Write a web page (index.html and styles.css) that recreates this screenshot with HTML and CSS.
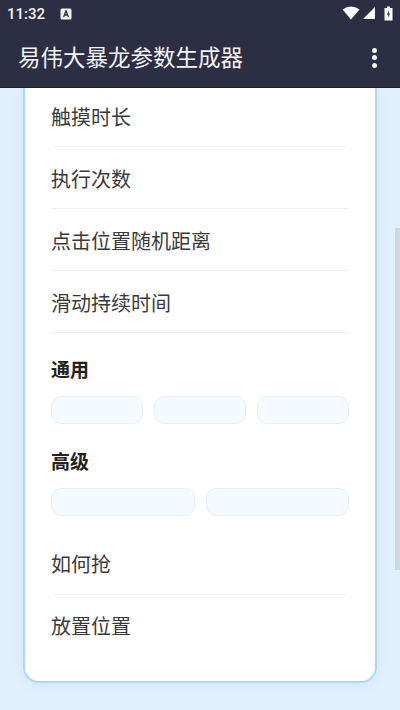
FILE: index.html
```html
<!DOCTYPE html>
<html lang="zh-CN">
<head>
  <meta charset="UTF-8" />
  <meta name="viewport" content="width=device-width, initial-scale=1.0"/>
  <title>易伟大暴龙参数生成器</title>
  <link rel="stylesheet" href="styles.css">
</head>
<body>
  <header class="app-header">
    <div class="status-bar">
      <span class="clock">11:32</span>
      <svg class="status-a" viewBox="0 0 12 12" width="12" height="12">
        <rect x="0.5" y="0.5" width="11" height="11" rx="1.5" fill="#f2f2f4"/>
        <path d="M3.6 9 L6 3 L8.4 9 M4.6 7 H7.4" fill="none" stroke="#2c2e43" stroke-width="1.3"/>
      </svg>
      <span class="status-right">
        <svg viewBox="0 0 18 14" width="18" height="14"><path d="M0.5 3.5 Q9 -2.5 17.500 3.500 L9 13.500 Z" fill="#fff"/></svg>
        <svg viewBox="0 0 14 14" width="14" height="14"><path d="M13 1 V13 H1 Z" fill="#fff"/></svg>
        <svg class="battery" viewBox="0 0 9 15" width="9" height="15">
          <path d="M3 0.500 H6 V2 H8.500 V14.500 H0.500 V2 H3 Z" fill="#fff"/>
          <path d="M5.200 4 L2.800 8.600 H4.300 L3.800 12 L6.200 7.400 H4.700 Z" fill="#2c2e43"/>
        </svg>
      </span>
    </div>
    <div class="toolbar">
      <h1 class="toolbar-title">易伟大暴龙参数生成器</h1>
      <div class="more"><i></i><i></i><i></i></div>
    </div>
  </header>

  <main class="content">
    <section class="card">
      <div class="row">触摸时长</div>
      <div class="row">执行次数</div>
      <div class="row">点击位置随机距离</div>
      <div class="row">滑动持续时间</div>

      <h2 class="group-title">通用</h2>
      <div class="inputs">
        <div class="input"></div>
        <div class="input"></div>
        <div class="input"></div>
      </div>

      <h2 class="group-title">高级</h2>
      <div class="inputs">
        <div class="input"></div>
        <div class="input"></div>
      </div>

      <div class="row after-inputs">如何抢</div>
      <div class="row last">放置位置</div>
    </section>
  </main>
  <div class="scrollbar"></div>
</body>
</html>
```

FILE: styles.css
```css
body {
  font-family: Roboto, "Noto Sans CJK SC", sans-serif;
  margin: 0;
  padding: 0;
  height: 710px;
  overflow: hidden;
  background: #e1f0fe;
  display: flex;
  flex-direction: column;
}
.app-header {
  background: #2c2e43;
  color: #fff;
  height: 88px;
  flex: none;
  border-bottom: 1px solid #1c1d2c;
  box-sizing: border-box;
  position: relative;
  z-index: 1;
}
.status-bar {
  height: 28px;
  display: flex;
  align-items: center;
  padding: 0 7px;
}
.clock {
  font-size: 15px;
  font-weight: 500;
  color: #f4f4f6;
}
.status-a {
  margin-left: 15px;
  margin-bottom: 1px;
}
.status-right {
  margin-left: auto;
  display: flex;
  align-items: center;
  gap: 2px;
  margin-bottom: 2px;
}
.battery {
  margin-left: 6px;
}
.toolbar {
  height: 60px;
  display: flex;
  align-items: center;
  justify-content: space-between;
  padding: 0 23px 4px 18px;
  box-sizing: border-box;
}
.toolbar-title {
  font-size: 22.500px;
  font-weight: 400;
  margin: 0;
  color: #f5f5f7;
}
.more {
  display: flex;
  flex-direction: column;
  gap: 2.500px;
  margin-top: 3px;
}
.more i {
  display: block;
  width: 5px;
  height: 5px;
  border-radius: 50%;
  background: #f5f5f7;
}
.content {
  flex: 1;
  padding: 0 23px;
  overflow: hidden;
}
.card {
  background: #fff;
  border: 2px solid #a9dbf8;
  border-top: none;
  border-radius: 0 0 16px 16px;
  padding: 0 26px 26px;
  margin-top: -3px;
  height: 598px;
  box-sizing: border-box;
  box-shadow: 0 2px 12px rgba(100, 170, 230, 0.12);
}
.row {
  height: 62px;
  box-sizing: border-box;
  padding-top: 2px;
  line-height: 63px;
  font-size: 20px;
  color: #3a3a3c;
  border-bottom: 1px solid #eff3f7;
}
.row.last {
  border-bottom: none;
}
.row.after-inputs,
.row.last {
  padding-top: 1px;
}
.row.after-inputs {
  margin-top: 17px;
}
.group-title {
  font-size: 19px;
  font-weight: 700;
  color: #222;
  margin: 22px 0 0;
  line-height: 31px;
}
.group-title + .inputs + .group-title {
  margin-top: 23px;
}
.inputs {
  display: flex;
  gap: 11px;
  margin-top: 10px;
}
.input {
  flex: 1;
  height: 28px;
  box-sizing: border-box;
  background: #f4faff;
  border: 1px solid #e4f1fa;
  border-radius: 10px;
}
.scrollbar {
  position: absolute;
  right: 0;
  top: 228px;
  width: 5px;
  height: 342px;
  background: #cfd8e2;
}
```
